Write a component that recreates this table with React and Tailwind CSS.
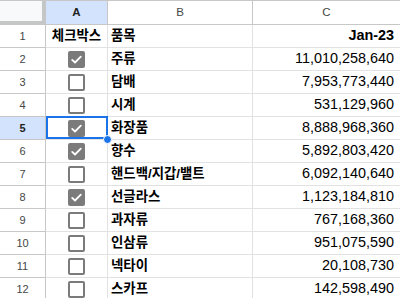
import React from "react";

const rows = [
  { n: 2, c: true, b: "주류", v: "11,010,258,640" },
  { n: 3, c: false, b: "담배", v: "7,953,773,440" },
  { n: 4, c: false, b: "시계", v: "531,129,960" },
  { n: 5, c: true, b: "화장품", v: "8,888,968,360", sel: true },
  { n: 6, c: true, b: "향수", v: "5,892,803,420" },
  { n: 7, c: false, b: "핸드백/지갑/밸트", v: "6,092,140,640" },
  { n: 8, c: true, b: "선글라스", v: "1,123,184,810" },
  { n: 9, c: false, b: "과자류", v: "767,168,360" },
  { n: 10, c: false, b: "인삼류", v: "951,075,590" },
  { n: 11, c: false, b: "넥타이", v: "20,108,730" },
  { n: 12, c: false, b: "스카프", v: "142,598,490" },
];

function Box({ checked }) {
  if (checked) {
    return (
      <div className="w-[17px] h-[17px] rounded-[2px] bg-[#7b7b7b] flex items-center justify-center">
        <svg width="13" height="13" viewBox="0 0 13 13">
          <path d="M2.2 6.9 L5 9.5 L10.8 3.6" fill="none" stroke="#ffffff" strokeWidth="1.8" strokeLinecap="round" strokeLinejoin="round" />
        </svg>
      </div>
    );
  }
  return <div className="w-[17px] h-[17px] rounded-[2px] border-2 border-[#7b7b7b] bg-white" />;
}

const font = { fontFamily: '"Liberation Sans", "Noto Sans CJK KR", sans-serif' };

export default function App() {
  return (
    <div className="w-[400px] h-[298px] overflow-hidden bg-white text-black" style={font}>
      {/* header row */}
      <div className="flex h-[25px] border-t border-[#c7c7c7]">
        <div className="box-border w-[46px] h-[24px] bg-[#f8f9fa] border-r-4 border-b-4 border-[#c4c7c5] shrink-0" />
        <div className="box-border w-[62px] h-[24px] shrink-0 bg-[#d3e3fd] border-r border-b border-[#c7c7c7] flex items-center justify-center text-[11.5px] text-[#1f1f1f] font-bold">A</div>
        <div className="box-border w-[145px] h-[24px] shrink-0 border-r border-b border-[#c7c7c7] flex items-center justify-center text-[11.5px] text-[#444746]">B</div>
        <div className="box-border flex-1 h-[24px] border-b border-[#c7c7c7] flex items-center justify-center text-[11.5px] text-[#444746]">C</div>
      </div>
      {/* row 1 */}
      <div className="flex h-[23px]">
        <div className="box-border w-[46px] shrink-0 border-r border-b border-[#c7c7c7] flex items-center justify-center text-[11px] text-[#444746]">1</div>
        <div className="box-border w-[62px] shrink-0 border-r border-b border-[#e2e2e2] flex items-center justify-center font-bold text-[13.4px] whitespace-nowrap">체크박스</div>
        <div className="box-border w-[145px] shrink-0 border-r border-b border-[#e2e2e2] flex items-center pl-[3px] font-bold text-[13.4px]">품목</div>
        <div className="box-border flex-1 border-b border-[#e2e2e2] flex items-center justify-end pr-[6px] font-bold text-[14.4px]">Jan-23</div>
      </div>
      {rows.map((r) => (
        <div key={r.n} className="flex h-[23px]">
          <div
            className={
              "box-border w-[46px] shrink-0 border-r border-b border-[#c7c7c7] flex items-center justify-center text-[11px] " +
              (r.sel ? "bg-[#d3e3fd] text-[#1f1f1f] font-bold" : "text-[#444746]")
            }
          >
            {r.n}
          </div>
          <div className="relative box-border w-[62px] shrink-0 border-r border-b border-[#e2e2e2] flex items-center justify-center">
            <Box checked={r.c} />
            {r.sel && (
              <>
                <div className="absolute left-0 top-[-1px] w-[62px] h-[23px] border-2 border-[#1a73e8] z-10" />
                <div className="absolute left-[57px] top-[18px] w-[9px] h-[9px] rounded-full bg-[#1a73e8] border border-white z-20" />
              </>
            )}
          </div>
          <div className="box-border w-[145px] shrink-0 border-r border-b border-[#e2e2e2] flex items-center pl-[3px] font-bold text-[13.4px] whitespace-nowrap">
            {r.b}
          </div>
          <div className="box-border flex-1 border-b border-[#e2e2e2] flex items-center justify-end pr-[6px] text-[14.4px]">{r.v}</div>
        </div>
      ))}
    </div>
  );
}
